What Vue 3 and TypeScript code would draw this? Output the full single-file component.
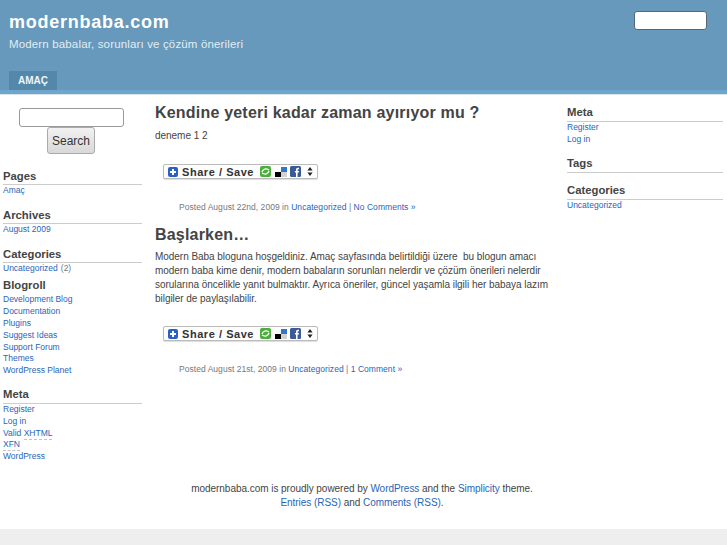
<template>
  <div class="page">
    <header class="masthead">
      <div class="brand">
        <div>
          <h1>modernbaba.com</h1>
          <p>Modern babalar, sorunları ve çözüm önerileri</p>
        </div>
        <input class="top-search" type="text" />
      </div>
      <nav class="menu"><a>AMAÇ</a></nav>
    </header>
    <div class="columns">
      <aside class="left">
        <form class="search" @submit.prevent>
          <input type="text" />
          <button type="submit">Search</button>
        </form>
        <section v-for="w in leftWidgets" :key="w.title" class="widget" :class="w.cls">
          <h3>{{ w.title }}</h3>
          <ul>
            <li v-for="l in w.links" :key="l"><a>{{ l }}</a><span v-if="w.count" class="count">{{ w.count }}</span></li>
            <template v-if="w.title === 'Meta'">
              <li><a>Valid <abbr>XHTML</abbr></a></li>
              <li><a><abbr>XFN</abbr></a></li>
              <li><a>WordPress</a></li>
            </template>
          </ul>
        </section>
      </aside>
      <main class="content">
        <article v-for="p in posts" :key="p.title" class="post">
          <h2>{{ p.title }}</h2>
          <p class="body">{{ p.body }}</p>
          <div class="share">
            <svg class="plus" width="10" height="10" viewBox="0 0 10 10"><rect width="10" height="10" rx="2" fill="#2a5fc4" /><path d="M5 2v6M2 5h6" stroke="#fff" stroke-width="2" /></svg>
            <span class="label">Share / Save</span>
            <svg class="green" width="11" height="11" viewBox="0 0 11 11"><rect width="11" height="11" rx="2" fill="#4cae3c" /><path d="M2 6c1-3 4-4 7-2M9 5c-1 3-4 4-7 2" stroke="#fff" stroke-width="1.300" fill="none" /></svg>
            <svg class="del" width="12" height="10" viewBox="0 0 12 10"><rect x="6" width="6" height="5" fill="#3274d1" /><rect y="5" width="6" height="5" fill="#000" /><rect x="6" y="5" width="6" height="5" fill="#d3d2d2" /></svg>
            <svg class="fb" width="11" height="11" viewBox="0 0 11 11"><rect width="11" height="11" rx="1.500" fill="#3b5a9a" /><path d="M7.600 11V6.600h1.200l.2-1.600H7.600V4c0-.5.2-.8.8-.8H9V1.800H8C6.600 1.800 6 2.600 6 3.800V5H4.900v1.600H6V11z" fill="#fff" /></svg>
            <svg class="arrows" width="6" height="9" viewBox="0 0 6 9"><path d="M3 0l2.600 3.400H.4zM3 9L.4 5.600h5.200z" fill="#222" /></svg>
          </div>
          <p class="meta">Posted {{ p.date }} in <a>Uncategorized</a> | <a>{{ p.comments }} »</a></p>
        </article>
      </main>
      <aside class="right">
        <section class="widget">
          <h3>Meta</h3>
          <ul><li><a>Register</a></li><li><a>Log in</a></li></ul>
        </section>
        <section class="widget">
          <h3>Tags</h3>
        </section>
        <section class="widget">
          <h3>Categories</h3>
          <ul><li><a>Uncategorized</a></li></ul>
        </section>
      </aside>
    </div>
    <footer class="foot">
      <p>modernbaba.com is proudly powered by <a>WordPress</a> and the <a>Simplicity</a> theme.</p>
      <p><a>Entries (RSS)</a> and <a>Comments (RSS)</a>.</p>
    </footer>
  </div>
</template>

<script setup lang="ts">
const leftWidgets = [
  { title: 'Pages', links: ['Amaç'] },
  { title: 'Archives', links: ['August 2009'] },
  { title: 'Categories', cls: 'tight', links: ['Uncategorized'], count: '(2)' },
  {
    title: 'Blogroll',
    cls: 'plain',
    links: ['Development Blog', 'Documentation', 'Plugins', 'Suggest Ideas', 'Support Forum', 'Themes', 'WordPress Planet'],
  },
  { title: 'Meta', cls: 'roomy', links: ['Register', 'Log in'] },
]

const posts = [
  {
    title: 'Kendine yeteri kadar zaman ayırıyor mu ?',
    body: 'deneme 1 2',
    date: 'August 22nd, 2009',
    comments: 'No Comments',
  },
  {
    title: 'Başlarken…',
    body: 'Modern Baba bloguna hoşgeldiniz. Amaç sayfasında belirtildiği üzere\u00a0 bu blogun amacı modern baba kime denir, modern babaların sorunları nelerdir ve çözüm önerileri nelerdir sorularına öncelikle yanıt bulmaktır. Ayrıca öneriler, güncel yaşamla ilgili her babaya lazım bilgiler de paylaşılabilir.',
    date: 'August 21st, 2009',
    comments: '1 Comment',
  },
]
</script>

<style>
html, body {
  background: #eeeeee;
}
</style>

<style scoped>
.page {
  font-family: "Liberation Sans", Arial, sans-serif;
  color: #444;
  background: #fff;
  height: 529px;
  overflow: hidden;
  display: flex;
  flex-direction: column;
}

a {
  color: #2a64b8;
}

p, h1, h2, h3, ul {
  margin: 0;
  padding: 0;
}

ul {
  list-style: none;
}

abbr {
  padding-bottom: 1px;
  border-bottom: 1px dashed #c4c4c4;
}

.masthead {
  height: 90px;
  background: #6699bb;
  border-bottom: 4px solid #70a6cc;
  display: flex;
  flex-direction: column;
  flex-shrink: 0;
  box-shadow: 0 1px 0 #d8e4ec;
}

.brand {
  display: flex;
  justify-content: space-between;
  padding: 11px 20px 0 9px;
  flex: 1;
}

.brand h1 {
  font-size: 18px;
  line-height: 22px;
  color: #fff;
  letter-spacing: 0.75px;
}

.brand p {
  font-size: 11.5px;
  line-height: 14px;
  margin-top: 4px;
  color: #e2edf4;
  letter-spacing: 0.15px;
}

.top-search {
  width: 71px;
  height: 17px;
  box-sizing: content-box;
  padding: 0;
  border: 1px solid #567;
  border-radius: 3px;
  background: #fff;
}

.menu {
  padding-left: 9px;
  display: flex;
}

.menu a {
  background: #5388ab;
  color: #f0f5f9;
  font-size: 10px;
  font-weight: bold;
  line-height: 19px;
  padding: 0 9px;
}

.columns {
  display: grid;
  grid-template-columns: 142px 1fr 160px;
  column-gap: 13px;
  flex: 1;
}

.left {
  padding: 14px 0 0 3px;
  min-width: 0;
}

.search {
  display: flex;
  flex-direction: column;
  align-items: center;
  margin: 0 0 15px -3px;
}

.search input {
  width: 103px;
  height: 17px;
  padding: 0;
  box-sizing: content-box;
  border: 1px solid #999;
  border-radius: 3px;
  background: #fff;
}

.search button {
  width: 48px;
  height: 27px;
  padding: 0;
  font: 12px "Liberation Sans", Arial, sans-serif;
  color: #333;
  border: 1px solid #aaa;
  border-radius: 3px;
  background: linear-gradient(#f2f2f2, #d8d8d8);
}

.widget {
  margin-bottom: 11px;
}

.widget.tight {
  margin-bottom: 4px;
}

.widget h3 {
  font-size: 11.3px;
  line-height: 15px;
  color: #444;
  border-bottom: 1px solid #ccc;
}

.widget.plain {
  margin-bottom: 10px;
}

.widget.plain h3 {
  border-bottom: none;
  padding-bottom: 1px;
}

.widget.roomy h3 {
  padding-bottom: 1px;
}

.widget li {
  font-size: 8.5px;
  line-height: 11.8px;
}

.count {
  color: #777;
  margin-left: 3px;
}

.content {
  padding-top: 9px;
  min-width: 0;
}

.post h2 {
  font-size: 16px;
  line-height: 20px;
  letter-spacing: 0.2px;
  color: #444;
}

.body {
  font-size: 10px;
  line-height: 14px;
  margin-top: 5px;
  letter-spacing: -0.04px;
  color: #444;
}

.post:first-child .body {
  margin-top: 6px;
}

.share {
  display: flex;
  align-items: center;
  box-sizing: border-box;
  width: 155px;
  height: 15px;
  margin: 20px 0 0 8px;
  padding: 0 0 0 4px;
  border: 1px solid #bbb;
  border-radius: 2px;
  background: #fdfdfd;
  box-shadow: 0 1px 1px #ddd;
}

.post:first-child .share {
  margin-top: 21px;
}

.share .label {
  font-size: 11px;
  font-weight: bold;
  color: #333;
  letter-spacing: 0.55px;
  margin-left: 4px;
  white-space: nowrap;
  width: 71px;
  flex: none;
}

.share svg {
  flex: none;
}

.share .green {
  margin-left: 7px;
}

.share .del {
  margin-left: 4px;
}

.share .fb {
  margin-left: 3px;
}

.share .arrows {
  margin-left: 6px;
}

.meta {
  font-size: 8.5px;
  line-height: 12px;
  letter-spacing: 0.04px;
  color: #777;
  margin: 22px 0 12px 24px;
}

.right {
  padding: 11px 4px 0 0;
  min-width: 0;
}

.right .widget {
  margin-bottom: 10px;
}

.right .widget h3 {
  padding-bottom: 1px;
}

.foot {
  text-align: center;
  font-size: 10px;
  line-height: 14px;
  letter-spacing: -0.04px;
  padding: 0 3px 19px 0;
  color: #444;
}
</style>
